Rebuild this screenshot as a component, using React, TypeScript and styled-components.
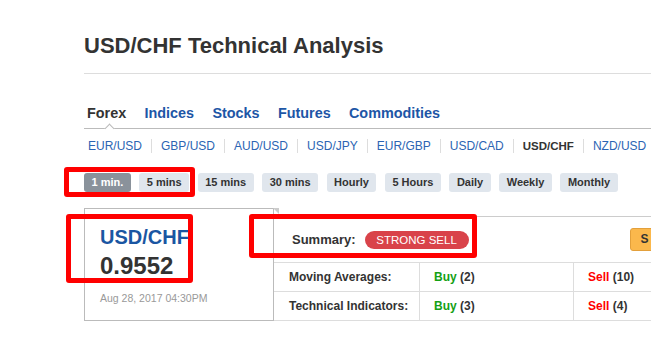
import styled, { createGlobalStyle } from 'styled-components';

const GlobalStyle = createGlobalStyle`
  html, body {
    margin: 0;
    padding: 0;
    background: #fff;
    overflow: hidden;
  }
  body {
    font-family: "Liberation Sans", Arial, sans-serif;
    color: #333;
  }
`;

const tabs = ['Forex', 'Indices', 'Stocks', 'Futures', 'Commodities'];
const pairs = ['EUR/USD', 'GBP/USD', 'AUD/USD', 'USD/JPY', 'EUR/GBP', 'USD/CAD', 'USD/CHF', 'NZD/USD'];
const periods = ['1 min.', '5 mins', '15 mins', '30 mins', 'Hourly', '5 Hours', 'Daily', 'Weekly', 'Monthly'];

const rows = [
  { label: 'Moving Averages:', buy: 2, sell: 10 },
  { label: 'Technical Indicators:', buy: 3, sell: 4 },
];

export default function App() {
  return (
    <Page>
      <GlobalStyle />
      <Header>
        <Title>USD/CHF Technical Analysis</Title>
      </Header>

      <TabBar>
        {tabs.map((tab, index) => (
          <Tab key={tab} $active={index === 0}>
            {tab}
          </Tab>
        ))}
      </TabBar>

      <PairList>
        {pairs.map((pair, index) => (
          <Pair key={pair} $active={pair === 'USD/CHF'} $first={index === 0}>
            {pair}
          </Pair>
        ))}
      </PairList>

      <PeriodList>
        {periods.map((period, index) => (
          <PeriodButton key={period} $active={index === 0}>
            {period}
          </PeriodButton>
        ))}
      </PeriodList>

      <QuoteRow>
        <QuoteBox>
          <QuoteSymbol>USD/CHF</QuoteSymbol>
          <QuotePrice>0.9552</QuotePrice>
          <QuoteDate>Aug 28, 2017 04:30PM</QuoteDate>
        </QuoteBox>

        <SummaryPanel>
          <SummaryRow>
            <SummaryLabel>Summary:</SummaryLabel>
            <SignalBadge>STRONG SELL</SignalBadge>
            <OrangeButton>S</OrangeButton>
          </SummaryRow>
          {rows.map((row) => (
            <TableRow key={row.label}>
              <Cell>{row.label}</Cell>
              <Cell $divided>
                <Buy>Buy</Buy>&nbsp;({row.buy})
              </Cell>
              <Cell $divided>
                <Sell>Sell</Sell>&nbsp;({row.sell})
              </Cell>
            </TableRow>
          ))}
        </SummaryPanel>
      </QuoteRow>

      <Marker style={{ left: 64, top: 167, width: 131, height: 30 }} />
      <Marker style={{ left: 66, top: 214, width: 127, height: 69 }} />
      <Marker style={{ left: 249, top: 214, width: 228, height: 44 }} />
    </Page>
  );
}

const Page = styled.div`
  position: relative;
  width: 900px;
  height: 342px;
  padding: 33px 0 0 84px;
  box-sizing: border-box;
`;

const Header = styled.div`
  padding-bottom: 14px;
  border-bottom: 1px solid #ddd;
`;

const Title = styled.h1`
  margin: 0;
  font-size: 22px;
  line-height: 26px;
  font-weight: bold;
  color: #333;
`;

const TabBar = styled.div`
  display: flex;
  gap: 18.3px;
  margin-top: 31px;
  padding: 0 0 7px 3px;
  border-bottom: 1px solid #bbb;
`;

const Tab = styled.div<{ $active?: boolean }>`
  position: relative;
  font-size: 14.4px;
  line-height: 16px;
  font-weight: bold;
  color: ${(p) => (p.$active ? '#333' : '#1d56a6')};

  &::after {
    content: '';
    display: ${(p) => (p.$active ? 'block' : 'none')};
    position: absolute;
    left: 19px;
    bottom: -11px;
    width: 6px;
    height: 6px;
    background: #fff;
    border-top: 1px solid #bbb;
    border-left: 1px solid #bbb;
    transform: rotate(45deg);
  }
`;

const PairList = styled.div`
  display: flex;
  margin-top: 10px;
`;

const Pair = styled.div<{ $active?: boolean; $first?: boolean }>`
  font-size: ${(p) => (p.$active ? '11.5px' : '12px')};
  line-height: 14px;
  padding: 0 9px 0 ${(p) => (p.$first ? '4px' : '9px')};
  border-left: ${(p) => (p.$first ? 'none' : '1px solid #ddd')};
  color: ${(p) => (p.$active ? '#333' : '#2b64b3')};
  font-weight: ${(p) => (p.$active ? 'bold' : 'normal')};
`;

const PeriodList = styled.div`
  display: flex;
  gap: 8.5px;
  margin-top: 20px;
`;

const PeriodButton = styled.div<{ $active?: boolean }>`
  height: 19px;
  line-height: 19px;
  padding: 0 7.5px;
  border-radius: 3px;
  font-size: 11px;
  font-weight: bold;
  background: ${(p) => (p.$active ? '#8a929b' : '#e0e6ed')};
  color: ${(p) => (p.$active ? '#fff' : '#333')};
`;

const QuoteRow = styled.div`
  display: flex;
  align-items: flex-start;
  margin-top: 16px;
`;

const QuoteBox = styled.div`
  position: relative;
  box-sizing: border-box;
  width: 190px;
  height: 113px;
  padding: 16px 0 0 15px;
  border: 1px solid #bbb;

  &::after {
    content: '';
    position: absolute;
    top: -1px;
    right: -6px;
    width: 0;
    height: 0;
    border-top: 6px solid #ccc;
    border-left: 6px solid transparent;
  }
`;

const QuoteSymbol = styled.div`
  font-size: 20px;
  line-height: 24px;
  font-weight: bold;
  color: #1a56a2;
`;

const QuotePrice = styled.div`
  margin-top: 3px;
  font-size: 24px;
  line-height: 28px;
  font-weight: bold;
  color: #333;
`;

const QuoteDate = styled.div`
  margin-top: 11px;
  font-size: 10.5px;
  line-height: 14px;
  color: #999;
`;

const SummaryPanel = styled.div`
  width: 440px;
  margin: 8px 0 0 -1px;
  border-top: 1px solid #ccc;
  border-left: 1px solid #bbb;
`;

const SummaryRow = styled.div`
  display: flex;
  align-items: center;
  height: 45px;
  padding-left: 18px;
`;

const SummaryLabel = styled.span`
  font-size: 13px;
  font-weight: bold;
  color: #333;
`;

const SignalBadge = styled.span`
  margin-left: 9px;
  width: 104px;
  height: 18px;
  line-height: 18px;
  border-radius: 9px;
  background: #d9434a;
  color: #fff;
  font-size: 11.5px;
  text-align: center;
`;

const OrangeButton = styled.span`
  margin-left: 161px;
  box-sizing: border-box;
  height: 23px;
  line-height: 21px;
  padding: 0 10px 0 10px;
  border: 1px solid #e3a03b;
  border-radius: 3px;
  background: #fbb84c;
  color: #333;
  font-size: 12px;
  font-weight: bold;
`;

const TableRow = styled.div`
  display: grid;
  grid-template-columns: 145px 154px 1fr;
  height: 28px;
  border-top: 1px solid #ddd;

  &:last-child {
    border-bottom: 1px solid #ddd;
  }
`;

const Cell = styled.div<{ $divided?: boolean }>`
  display: flex;
  align-items: center;
  padding-left: ${(p) => (p.$divided ? '14px' : '15px')};
  border-left: ${(p) => (p.$divided ? '1px solid #ddd' : 'none')};
  font-size: 12px;
  font-weight: bold;
  color: #333;
`;

const Buy = styled.span`
  color: #14a014;
`;

const Sell = styled.span`
  color: #f00;
`;

const Marker = styled.div`
  position: absolute;
  box-sizing: border-box;
  border: 5px solid #f00;
  border-radius: 3px;
  pointer-events: none;
`;
